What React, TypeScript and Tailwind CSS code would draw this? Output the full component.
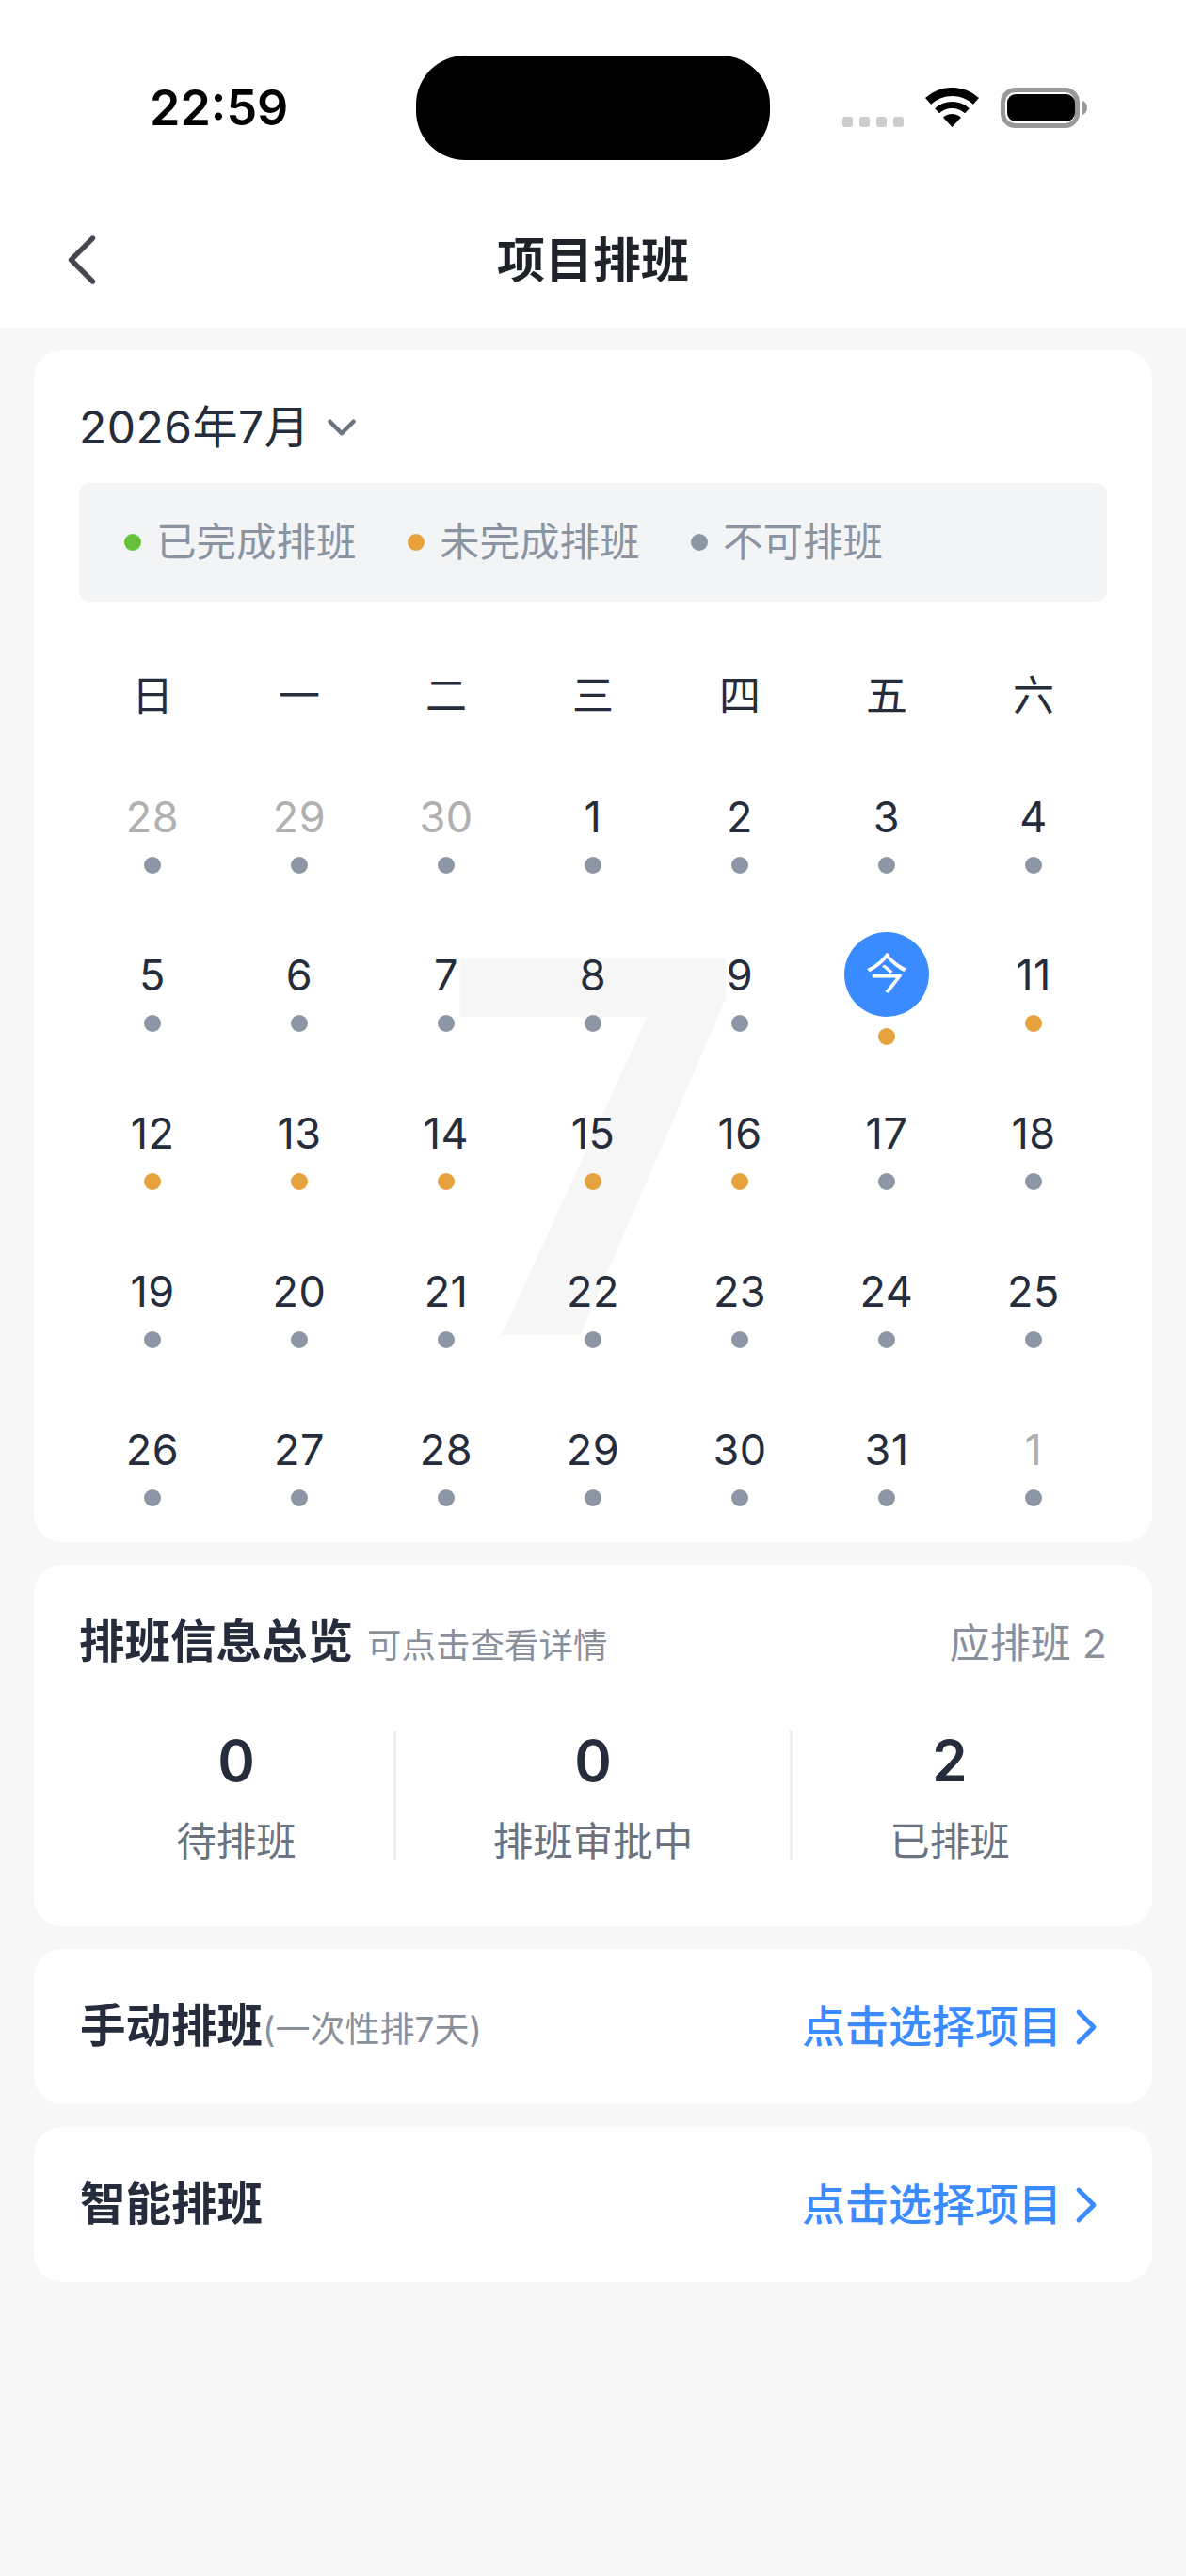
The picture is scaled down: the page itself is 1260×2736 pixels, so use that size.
import React from 'react';
import { ChevronLeft, ChevronRight, ChevronDown } from 'lucide-react';

const weekdays = ['日', '一', '二', '三', '四', '五', '六'];

type Day = { n: string; muted?: boolean; today?: boolean; dot: string };

const gray = 'bg-[#8c96a5]';
const orange = 'bg-[#e6a23c]';

const days: Day[] = [
  { n: '28', muted: true, dot: gray },
  { n: '29', muted: true, dot: gray },
  { n: '30', muted: true, dot: gray },
  ...['1', '2', '3', '4', '5', '6', '7', '8', '9'].map((n) => ({ n, dot: gray })),
  { n: '今', today: true, dot: orange },
  ...['11', '12', '13', '14', '15', '16'].map((n) => ({ n, dot: orange })),
  ...['17', '18', '19', '20', '21', '22', '23', '24', '25', '26', '27', '28', '29', '30', '31'].map((n) => ({ n, dot: gray })),
  { n: '1', muted: true, dot: gray },
];

const legend = [
  { label: '已完成排班', color: 'bg-[#67c23a]' },
  { label: '未完成排班', color: orange },
  { label: '不可排班', color: gray },
];

const StatusBar = () => (
  <div className="flex h-[204px] items-start pt-[59px]">
    <div className="flex h-[111px] w-[442px] items-center pl-[159px] text-[52px] leading-none font-semibold text-black">
      22:59
    </div>
    <div className="h-[111px] w-[376px] rounded-[52px] bg-black"></div>
    <div className="mt-[34px] flex h-[43px] items-end pl-[77px]">
      <div className="mb-px flex gap-[7px]">
        <div className="h-[11px] w-[11px] rounded-[3px] bg-[#cccccc]"></div>
        <div className="h-[11px] w-[11px] rounded-[3px] bg-[#cccccc]"></div>
        <div className="h-[11px] w-[11px] rounded-[3px] bg-[#cccccc]"></div>
        <div className="h-[11px] w-[11px] rounded-[3px] bg-[#cccccc]"></div>
      </div>
      <svg className="mb-px ml-[23px]" width="57" height="42" viewBox="0 0 57 42" fill="#000">
        <path d="M0 11.1A42 42 0 0 1 57 11.1L50.9 17.7A33 33 0 0 0 6.1 17.7Z" />
        <path d="M10.2 22.15A27 27 0 0 1 46.8 22.15L42.1 27.3A20 20 0 0 0 14.9 27.3Z" />
        <path d="M19 31.7A14 14 0 0 1 38 31.7L28.5 42Z" />
      </svg>
      <svg className="ml-[23px]" width="93" height="43" viewBox="0 0 93 43">
        <rect x="2.5" y="2.5" width="79" height="38" rx="13" fill="none" stroke="#999999" strokeWidth="5" />
        <rect x="7" y="7" width="72" height="29" rx="9" fill="#000" />
        <path d="M87 14C90 15 92 18 92 21.5C92 25 90 28 87 29Z" fill="#999999" />
      </svg>
    </div>
  </div>
);

const DayCell = ({ day }: { day: Day }) => (
  <div className="flex h-[168px] flex-col items-center">
    {day.today ? (
      <div className="-mt-[16px] flex h-[90px] w-[90px] items-center justify-center rounded-full bg-[#3a8bff] text-[45px] text-white">
        {day.n}
      </div>
    ) : (
      <div className={`flex h-[60px] items-center text-[45px] tracking-[0.5px] ${day.muted ? 'text-[#b0b0b0]' : 'text-[#252c3b]'}`}>
        {day.n}
      </div>
    )}
    <div className={`mt-[12px] h-[18px] w-[18px] rounded-full ${day.dot}`}></div>
  </div>
);

const PickRow = ({ title, note }: { title: string; note?: string }) => (
  <div className="flex h-[165px] items-center justify-between rounded-[30px] bg-white pr-[38px] pl-[49px]">
    <div className="flex items-baseline">
      <span className="text-[48.5px] font-semibold text-[#252c3b]">{title}</span>
      {note && <span className="text-[37px] text-[#8a909b]">{note}</span>}
    </div>
    <div className="flex items-center text-[46px] font-medium text-[#3a8bff]">
      点击选择项目
      <ChevronRight size={64} strokeWidth={1.8} className="-ml-[6px]" />
    </div>
  </div>
);

export default function App() {
  return (
    <div className="min-h-[2736px] bg-[#f7f7f7] font-['Inter','Noto_Sans_CJK_SC',sans-serif]">
      {/* Header */}
      <div className="h-[348px] bg-white">
        <StatusBar />
        <div className="relative flex h-[144px] items-center justify-center pt-[2px]">
          <ChevronLeft size={92} strokeWidth={1.4} className="absolute top-[26px] left-[41px] text-[#444750]" />
          <span className="text-[51px] font-semibold text-[#1f2229]">项目排班</span>
        </div>
      </div>

      <div className="flex flex-col gap-[24px] px-[36px] pt-[24px]">
        {/* Calendar */}
        <div className="relative overflow-hidden rounded-[30px] bg-white px-[48px] pt-[52px] pb-[38px]">
          <div className="absolute top-[573px] left-[436px] font-['Roboto',sans-serif] text-[562px] leading-[1] font-bold text-[#f6f6f6]">
            7
          </div>
          <div className="relative">
            <div className="flex h-[60px] items-center gap-[9px] text-[48px] tracking-[0.5px] text-[#252c3b]">
              2026年7月
              <ChevronDown size={50} strokeWidth={2.2} className="text-[#6b7280]" />
            </div>
            <div className="mt-[29px] flex h-[126px] items-center gap-[54.5px] rounded-[12px] bg-[#f2f4f6] pl-[48px]">
              {legend.map((item) => (
                <div key={item.label} className="flex items-center gap-[16px]">
                  <div className={`h-[18px] w-[18px] rounded-full ${item.color}`}></div>
                  <span className="text-[42.5px] text-[#8a94a3]">{item.label}</span>
                </div>
              ))}
            </div>
            <div className="mt-[70px] mb-[69px] grid grid-cols-7">
              {weekdays.map((w) => (
                <div key={w} className="flex h-[60px] items-center justify-center text-[44px] text-[#252c3b]">
                  {w}
                </div>
              ))}
            </div>
            <div className="-mb-[78px] grid grid-cols-7">
              {days.map((day, i) => (
                <DayCell key={i} day={day} />
              ))}
            </div>
          </div>
        </div>

        {/* Overview */}
        <div className="rounded-[30px] bg-white px-[48px] pt-[46px] pb-[70px]">
          <div className="mb-[64px] flex h-[66px] items-baseline">
            <span className="text-[48.5px] font-semibold text-[#252c3b]">排班信息总览</span>
            <span className="ml-[15px] text-[36.5px] text-[#8a909b]">可点击查看详情</span>
            <span className="ml-auto text-[43px] text-[#8a909b]">应排班 2</span>
          </div>
          <div className="flex h-[138px]">
            {[
              { v: '0', l: '待排班', w: 'w-[334px]' },
              { v: '0', l: '排班审批中', w: 'w-[424px] border-x-[3px] border-[#eeeeee]' },
              { v: '2', l: '已排班', w: 'w-[334px]' },
            ].map((s) => (
              <div key={s.l} className={`flex flex-col items-center ${s.w}`}>
                <div className="h-[64px] text-[60px] leading-[64px] font-semibold text-[#252c3b]">{s.v}</div>
                <div className="mt-[34px] h-[40px] text-[42.5px] leading-[40px] text-[#6b7280]">{s.l}</div>
              </div>
            ))}
          </div>
        </div>

        <PickRow title="手动排班" note="(一次性排7天)" />
        <PickRow title="智能排班" />
      </div>
    </div>
  );
}
